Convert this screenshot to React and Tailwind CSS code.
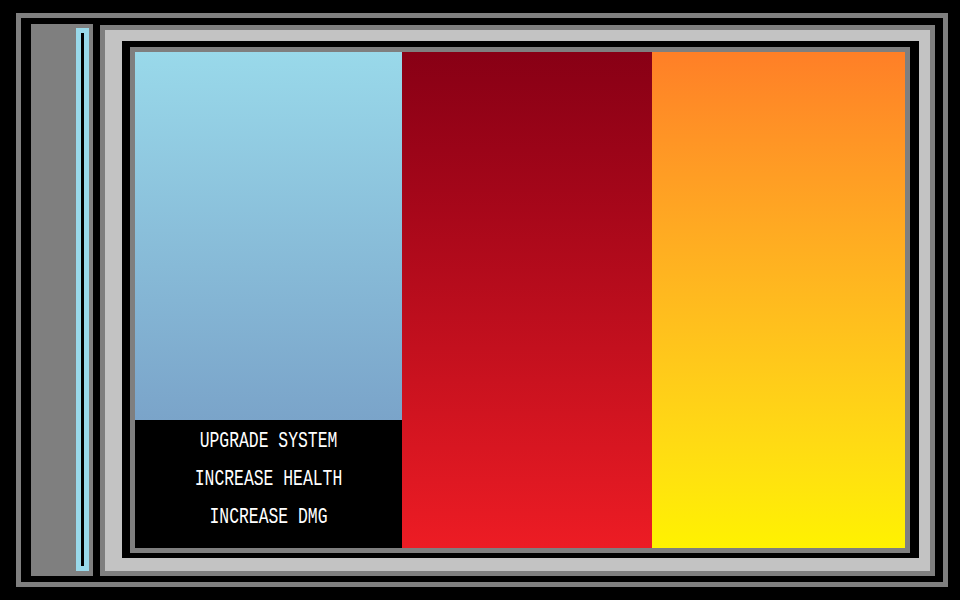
export default function App() {
  const txt = "text-white text-[16.4px] leading-none scale-y-[1.3] tracking-[0px] whitespace-pre";
  return (
    <div className="w-[960px] h-[600px] bg-black overflow-hidden pt-[13px] pl-[16px]" style={{ fontFamily: '"Liberation Mono", monospace' }}>
      <div className="w-[932px] h-[574px] border-[5px] border-[#7f7f7f] flex pl-[10px] pr-[8px]">
        {/* left panel */}
        <div className="w-[62px] mt-[6px] mb-[6px] bg-[#7f7f7f] flex justify-end pt-[4px] pb-[5px] pr-[4px]">
          <div className="w-[13px] h-full border-[5px] border-[#99d9ea] bg-black" />
        </div>
        {/* main panel */}
        <div className="ml-[7px] w-[835px] mt-[7px] mb-[6px] border-[5px] border-[#7f7f7f] bg-[#c3c3c3] pl-[17px] pt-[11px] pr-[11px] pb-[13px]">
          <div className="w-full h-full bg-black pl-[8px] pt-[6px] pr-[9px] pb-[5px]">
            <div className="w-full h-full border-[5px] border-[#7f7f7f] flex">
              <div className="relative w-[267px] h-full bg-gradient-to-b from-[#99d9ea] to-[#7092be] flex flex-col justify-end">
                <div className="h-[128px] bg-black flex flex-col items-center pt-[14px] gap-[21.6px]">
                  <div className={txt}>UPGRADE SYSTEM</div>
                  <div className={txt}>INCREASE HEALTH</div>
                  <div className={txt}>INCREASE DMG</div>
                </div>
              </div>
              <div className="w-[250px] h-full bg-gradient-to-b from-[#880015] to-[#ed1c24]" />
              <div className="flex-1 h-full bg-gradient-to-b from-[#ff7f27] to-[#fff200]" />
            </div>
          </div>
        </div>
      </div>
    </div>
  );
}
